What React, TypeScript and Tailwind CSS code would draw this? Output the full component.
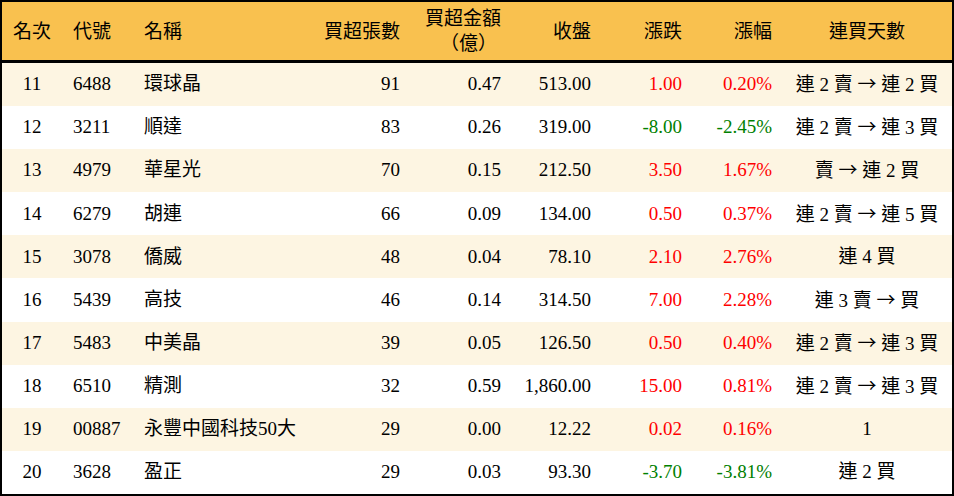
const rows = [
  { rank: 11, code: '6488', name: '環球晶', vol: '91', amt: '0.47', close: '513.00', chg: '1.00', pct: '0.20%', streak: '連 2 賣 → 連 2 買' },
  { rank: 12, code: '3211', name: '順達', vol: '83', amt: '0.26', close: '319.00', chg: '-8.00', pct: '-2.45%', streak: '連 2 賣 → 連 3 買' },
  { rank: 13, code: '4979', name: '華星光', vol: '70', amt: '0.15', close: '212.50', chg: '3.50', pct: '1.67%', streak: '賣 → 連 2 買' },
  { rank: 14, code: '6279', name: '胡連', vol: '66', amt: '0.09', close: '134.00', chg: '0.50', pct: '0.37%', streak: '連 2 賣 → 連 5 買' },
  { rank: 15, code: '3078', name: '僑威', vol: '48', amt: '0.04', close: '78.10', chg: '2.10', pct: '2.76%', streak: '連 4 買' },
  { rank: 16, code: '5439', name: '高技', vol: '46', amt: '0.14', close: '314.50', chg: '7.00', pct: '2.28%', streak: '連 3 賣 → 買' },
  { rank: 17, code: '5483', name: '中美晶', vol: '39', amt: '0.05', close: '126.50', chg: '0.50', pct: '0.40%', streak: '連 2 賣 → 連 3 買' },
  { rank: 18, code: '6510', name: '精測', vol: '32', amt: '0.59', close: '1,860.00', chg: '15.00', pct: '0.81%', streak: '連 2 賣 → 連 3 買' },
  { rank: 19, code: '00887', name: '永豐中國科技50大', vol: '29', amt: '0.00', close: '12.22', chg: '0.02', pct: '0.16%', streak: '1' },
  { rank: 20, code: '3628', name: '盈正', vol: '29', amt: '0.03', close: '93.30', chg: '-3.70', pct: '-3.81%', streak: '連 2 買' },
];

const cols = 'grid grid-cols-[60px_72px_176px_100px_101px_90px_91px_90px_1fr] items-center';

// 箭頭用 CJK 字型，寬度較接近原圖
function Streak({ text }: { text: string }) {
  const parts = text.split('→');
  return (
    <>
      {parts.map((p, i) => (
        <span key={i}>
          {i > 0 && <span className="font-['Noto_Sans_CJK_TC',sans-serif]">→</span>}
          {p}
        </span>
      ))}
    </>
  );
}

export default function App() {
  return (
    <div className="w-[954px] h-[496px] border-2 border-black flex flex-col bg-white text-black text-[19px] font-['Liberation_Serif','Noto_Sans_CJK_TC',serif]">
      {/* 表頭 */}
      <div className={`${cols} h-[61px] shrink-0 bg-[#f9c14f] border-b-[3px] border-black leading-[25px]`}>
        <div className="text-center">名次</div>
        <div className="pl-[11px]">代號</div>
        <div className="pl-[10px]">名稱</div>
        <div className="text-right pr-[10px]">買超張數</div>
        <div className="text-right pr-[10px] [text-spacing-trim:space-all]">
          <div>買超金額</div>
          <div className="pr-[4px]">（億）</div>
        </div>
        <div className="text-right pr-[10px]">收盤</div>
        <div className="text-right pr-[10px]">漲跌</div>
        <div className="text-right pr-[10px]">漲幅</div>
        <div className="text-center">連買天數</div>
      </div>

      <div className="flex-1 flex flex-col">
        {rows.map((r, i) => {
          const color = r.chg.startsWith('-') ? 'text-[#008000]' : 'text-[#ff0000]';
          return (
            <div key={r.rank} className={`${cols} flex-1 ${i % 2 === 0 ? 'bg-[#fdf5e2]' : 'bg-white'}`}>
              <div className="text-center">{r.rank}</div>
              <div className="pl-[11px]">{r.code}</div>
              <div className="pl-[10px] whitespace-nowrap">{r.name}</div>
              <div className="text-right pr-[10px]">{r.vol}</div>
              <div className="text-right pr-[10px]">{r.amt}</div>
              <div className="text-right pr-[10px]">{r.close}</div>
              <div className={`text-right pr-[10px] ${color}`}>{r.chg}</div>
              <div className={`text-right pr-[10px] ${color}`}>{r.pct}</div>
              <div className="text-center whitespace-pre">
                <Streak text={r.streak} />
              </div>
            </div>
          );
        })}
      </div>
    </div>
  );
}
